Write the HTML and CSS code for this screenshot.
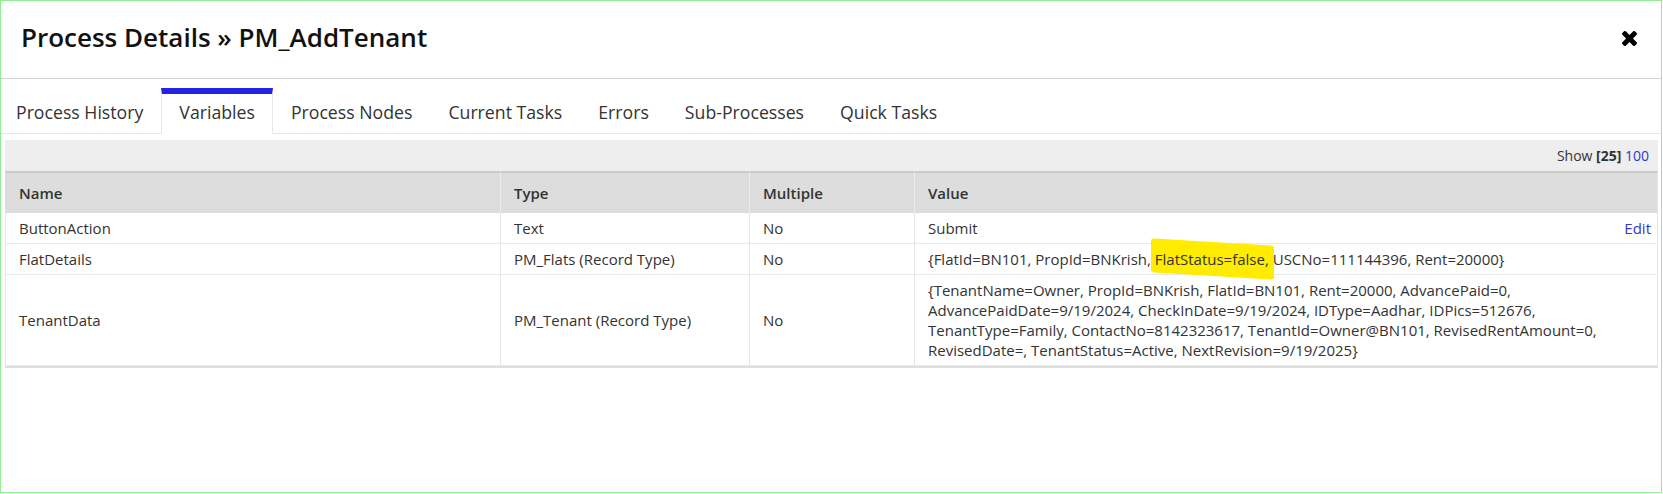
FILE: index.html
```html
<!DOCTYPE html>
<html lang="en">
<head>
    <meta charset="UTF-8">
    <title>Process Details</title>
    <link rel="stylesheet" href="styles.css">
</head>
<body>
    <div class="dialog">
        <div class="dialog-header">
            <h1>Process Details » PM_AddTenant</h1>
            <a class="close" href="#" title="Close">
                <svg viewBox="302 366 1188 1188" width="15" height="15">
                    <path d="M1490 1322q0 40-28 68l-136 136q-28 28-68 28t-68-28l-294-294-294 294q-28 28-68 28t-68-28l-136-136q-28-28-28-68t28-68l294-294-294-294q-28-28-28-68t28-68l136-136q28-28 68-28t68 28l294 294 294-294q28-28 68-28t68 28l136 136q28 28 28 68t-28 68l-294 294 294 294q28 28 28 68z"/>
                </svg>
            </a>
        </div>

        <ul class="tabs">
            <li>Process History</li>
            <li class="active">Variables</li>
            <li>Process Nodes</li>
            <li>Current Tasks</li>
            <li>Errors</li>
            <li>Sub-Processes</li>
            <li>Quick Tasks</li>
        </ul>

        <div class="grid">
            <div class="pager">Show <b>[25]</b> <a href="#">100</a></div>
            <table>
                <colgroup>
                    <col class="col-name">
                    <col class="col-type">
                    <col class="col-multi">
                    <col>
                </colgroup>
                <thead>
                    <tr>
                        <th>Name</th>
                        <th>Type</th>
                        <th>Multiple</th>
                        <th>Value</th>
                    </tr>
                </thead>
                <tbody>
                    <tr>
                        <td>ButtonAction</td>
                        <td>Text</td>
                        <td>No</td>
                        <td><a class="edit" href="#">Edit</a>Submit</td>
                    </tr>
                    <tr>
                        <td>FlatDetails</td>
                        <td>PM_Flats (Record Type)</td>
                        <td>No</td>
                        <td>{FlatId=BN101, PropId=BNKrish, <span class="mark">FlatStatus=false,</span> USCNo=111144396, Rent=20000}</td>
                    </tr>
                    <tr>
                        <td>TenantData</td>
                        <td>PM_Tenant (Record Type)</td>
                        <td>No</td>
                        <td>{TenantName=Owner, PropId=BNKrish, FlatId=BN101, Rent=20000, AdvancePaid=0,<br>AdvancePaidDate=9/19/2024, CheckInDate=9/19/2024, IDType=Aadhar, IDPics=512676,<br>TenantType=Family, ContactNo=8142323617, TenantId=Owner@BN101, RevisedRentAmount=0,<br>RevisedDate=, TenantStatus=Active, NextRevision=9/19/2025}</td>
                    </tr>
                </tbody>
            </table>
        </div>
    </div>
</body>
</html>
```

FILE: styles.css
```css
html, body {
    margin: 0;
    background: #fff;
}
body {
    font-family: "Open Sans", "Liberation Sans", sans-serif;
    color: #333;
}
.dialog {
    box-sizing: border-box;
    width: 1662px;
    height: 493px;
    border: 1px solid #90ee90;
}
.dialog-header {
    box-sizing: border-box;
    height: 78px;
    display: flex;
    justify-content: space-between;
    align-items: flex-start;
    padding: 0 24px 0 20px;
    border-bottom: 1px solid #d4d4d4;
}
.dialog-header h1 {
    margin: 19px 0 0;
    font-size: 26px;
    font-weight: 600;
    line-height: 35px;
    color: #111;
}
.close {
    margin-top: 30px;
    display: block;
    line-height: 0;
}
.close svg {
    fill: #000;
}
.tabs {
    display: flex;
    margin: 0;
    padding: 9px 0 0;
    list-style: none;
    border-bottom: 1px solid #e6e6e6;
}
.tabs li {
    padding: 6px 17px 9px;
    font-size: 17.7px;
    line-height: 24px;
    color: #333;
    border: 1px solid transparent;
    border-top: 6px solid transparent;
    margin-bottom: -1px;
    cursor: pointer;
}
.tabs li:first-child {
    padding-left: 14px;
}
.tabs li.active {
    border-color: #e6e6e6;
    border-top-color: #2323e4;
    border-bottom-color: #fff;
}
.grid {
    margin: 6px 3px 0 4px;
    border-bottom: 2px solid #dedede;
}
.pager {
    background: #eee;
    height: 31px;
    line-height: 31px;
    font-size: 14px;
    text-align: right;
    padding-right: 9px;
    color: #333;
}
.pager b {
    font-weight: 700;
}
a {
    color: #3535c8;
    text-decoration: none;
}
table {
    width: 100%;
    border-collapse: separate;
    border-spacing: 0;
    table-layout: fixed;
    font-size: 15px;
}
.col-name {
    width: 495px;
}
.col-type {
    width: 249px;
}
.col-multi {
    width: 165px;
}
th {
    background: #ddd;
    border-top: 2px solid #cacaca;
    border-left: 1px solid #ececec;
    padding: 10px 6px 10px 13px;
    line-height: 20px;
    font-weight: 600;
    text-align: left;
    color: #333;
}
th:first-child {
    border-left-color: #ddd;
}
td {
    padding: 5px 6px 5px 13px;
    line-height: 20px;
    border-left: 1px solid #e6e6e6;
    border-bottom: 1px solid #e9e9e9;
    vertical-align: middle;
    color: #333;
}
th:last-child,
td:last-child {
    border-right: 1px solid #e6e6e6;
}
.edit {
    float: right;
}
/* marker-style highlight behind a value */
.mark {
    position: relative;
    z-index: 0;
}
.mark::before {
    content: "";
    position: absolute;
    top: -7px;
    bottom: -7px;
    left: -4px;
    right: -5px;
    background: #ffec00;
    border-radius: 3px;
    transform: skewY(3.5deg);
    z-index: -1;
}
```
